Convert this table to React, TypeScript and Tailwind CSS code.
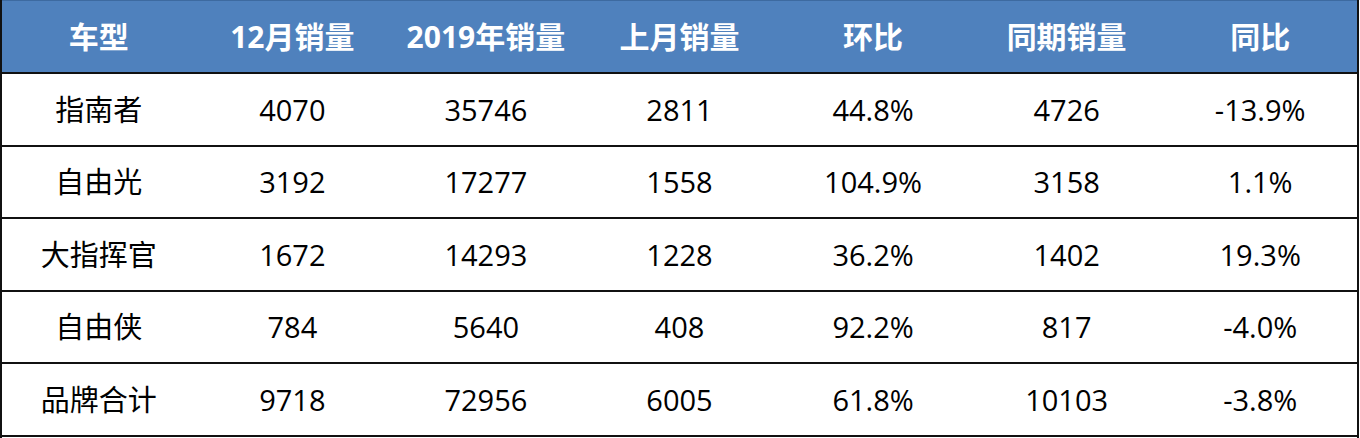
import React from 'react';

const headers = ['车型', '12月销量', '2019年销量', '上月销量', '环比', '同期销量', '同比'];

const rows: string[][] = [
  ['指南者', '4070', '35746', '2811', '44.8%', '4726', '-13.9%'],
  ['自由光', '3192', '17277', '1558', '104.9%', '3158', '1.1%'],
  ['大指挥官', '1672', '14293', '1228', '36.2%', '1402', '19.3%'],
  ['自由侠', '784', '5640', '408', '92.2%', '817', '-4.0%'],
  ['品牌合计', '9718', '72956', '6005', '61.8%', '10103', '-3.8%'],
];

const font = { fontFamily: '"Open Sans", "Noto Sans CJK SC", sans-serif' };

export default function App() {
  return (
    <div className="w-[1360px] h-[438px] bg-white" style={font}>
      <div className="w-[1359px] h-[438px] border-x-2 border-[#111]">
        <div className="grid grid-cols-7 h-[74px] bg-[#4f81bd] border-b-2 border-t border-[#111] border-t-[#3d6aa0]">
          {headers.map((h) => (
            <div key={h} className="flex items-center justify-center text-white font-bold text-[30px] leading-none">
              {h}
            </div>
          ))}
        </div>
        {rows.map((r, i) => (
          <div key={i} className="grid grid-cols-7 h-[72.5px] border-b-2 border-[#111]">
            {r.map((c, j) => (
              <div key={j} className="flex items-center justify-center text-black text-[29px] leading-none">
                {c}
              </div>
            ))}
          </div>
        ))}
      </div>
    </div>
  );
}
